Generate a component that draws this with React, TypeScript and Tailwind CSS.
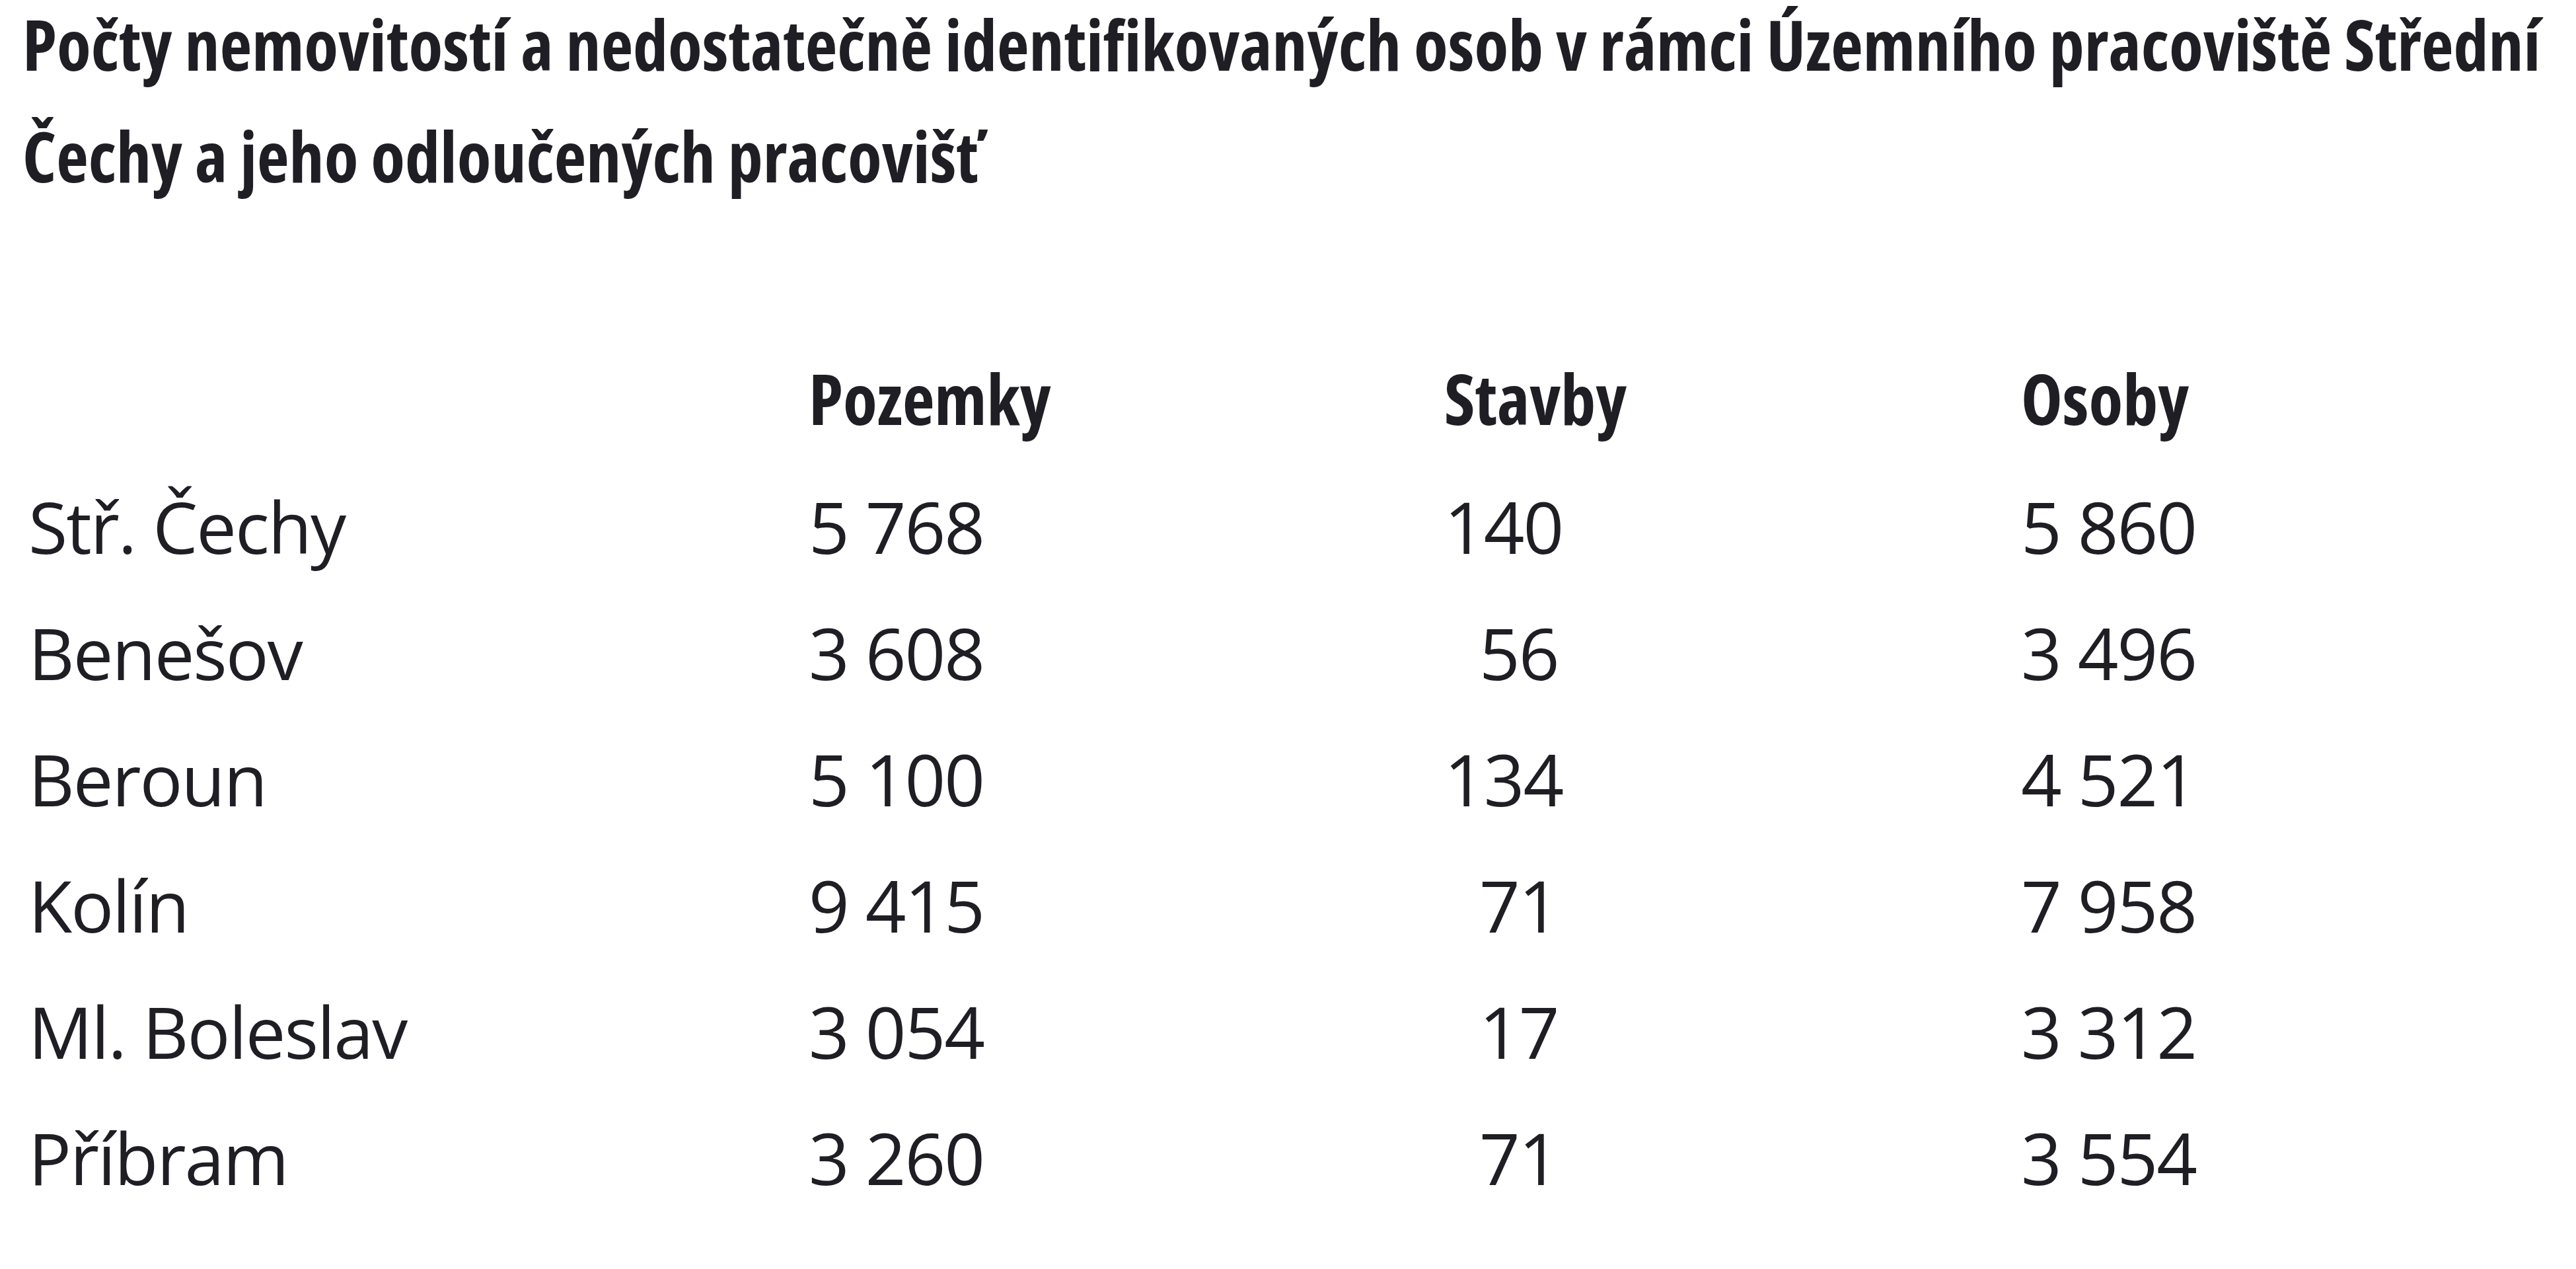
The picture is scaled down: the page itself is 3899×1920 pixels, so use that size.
import React from "react";

type Row = { name: string; poz: string; stav: string; short: boolean; os: string };

const rows: Row[] = [
  { name: "Stř. Čechy", poz: "5 768", stav: "140", short: false, os: "5 860" },
  { name: "Benešov", poz: "3 608", stav: "56", short: true, os: "3 496" },
  { name: "Beroun", poz: "5 100", stav: "134", short: false, os: "4 521" },
  { name: "Kolín", poz: "9 415", stav: "71", short: true, os: "7 958" },
  { name: "Ml. Boleslav", poz: "3 054", stav: "17", short: true, os: "3 312" },
  { name: "Příbram", poz: "3 260", stav: "71", short: true, os: "3 554" },
];

export default function App() {
  return (
    <div className="bg-white text-[#1f1e24] w-[3899px] h-[1920px] overflow-hidden font-['Open_Sans',sans-serif]">
      <h1 className="pl-[34px] text-[106px] font-bold font-stretch-condensed whitespace-nowrap">
        <span className="block leading-[133px]">
          Počty nemovitostí a nedostatečně identifikovaných osob v rámci Územního pracoviště Střední
        </span>
        <span className="block mt-[18px] leading-[169px]">Čechy a jeho odloučených pracovišť</span>
      </h1>

      <div className="mt-[187px] pl-[43px]">
        <div className="grid grid-cols-[1181px_962px_873px_1fr] h-[191px] items-center text-[106px] leading-[191px] font-bold font-stretch-condensed">
          <div />
          <div>Pozemky</div>
          <div>Stavby</div>
          <div>Osoby</div>
        </div>
        <div className="mt-[3px] flex flex-col">
          {rows.map((r) => (
            <div
              key={r.name}
              className="grid grid-cols-[1181px_962px_873px_1fr] h-[191px] items-center text-[108px] leading-[191px] tracking-[-2px] whitespace-nowrap"
            >
              <div>{r.name}</div>
              <div>{r.poz}</div>
              <div className={r.short ? "pl-[53px]" : ""}>{r.stav}</div>
              <div>{r.os}</div>
            </div>
          ))}
        </div>
      </div>
    </div>
  );
}
